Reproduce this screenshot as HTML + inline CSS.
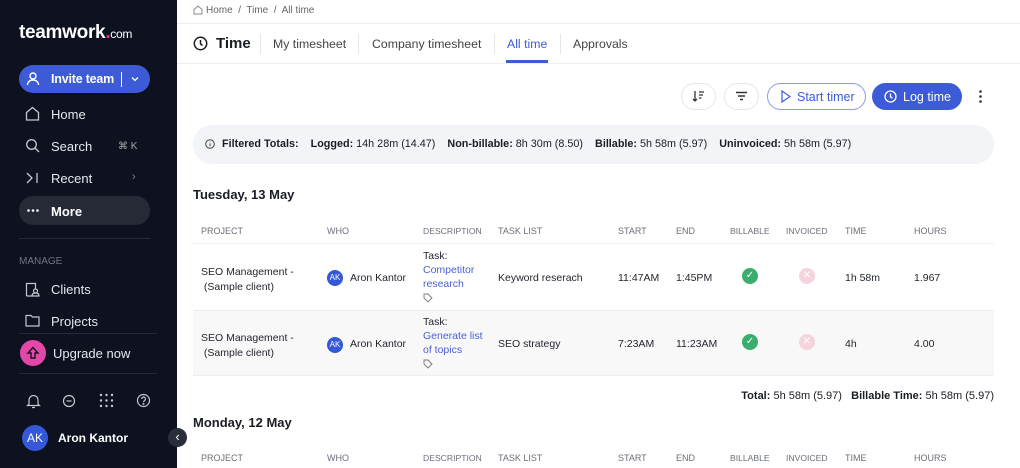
<!DOCTYPE html>
<html><head><meta charset="utf-8"><style>
*{margin:0;padding:0;box-sizing:border-box}
body{width:1020px;height:468px;overflow:hidden;font-family:"Liberation Sans",sans-serif;background:#fff;position:relative;color:#1a1d24}
.a{position:absolute;white-space:nowrap}
#sb{position:absolute;left:0;top:0;width:177px;height:468px;background:#0d1120;color:#e6e8ee}
.nav{position:absolute;left:51px;font-size:13px;color:#e6e8ee}
.ic{position:absolute;left:25px}
.th{font-size:9px;color:#6b6f7a;top:226px}
.td{font-size:10.5px;color:#1f232b}
.lnk{color:#4a5fd6}
</style></head><body>
<div id="sb">
 <div class="a" style="left:19px;top:22px;font-size:19px;font-weight:bold;color:#fff;letter-spacing:-.3px">teamwork<span style="color:#e1368e">.</span><span style="font-size:12px;font-weight:normal">com</span></div>
 <div class="a" style="left:19px;top:65px;width:131px;height:28px;border-radius:14px;background:#3d5bd6"></div>
 <svg class="a" style="left:26px;top:71px" width="14" height="15" viewBox="0 0 14 15" fill="none" stroke="#fff" stroke-width="1.4"><circle cx="7" cy="5" r="3"/><path d="M1.5 14c0-3 2.5-5 5.5-5s5.5 2 5.5 5"/></svg>
 <div class="a" style="left:51px;top:72px;font-size:12.5px;color:#fff;font-weight:bold;letter-spacing:-.2px">Invite team</div>
 <div class="a" style="left:121px;top:71px;width:1px;height:15px;background:#fff;top:72px"></div>
 <svg class="a" style="left:131px;top:76px" width="8" height="6" viewBox="0 0 8 6" fill="none" stroke="#fff" stroke-width="1.3"><path d="M1 1.5l3 3 3-3"/></svg>
 <svg class="ic" style="top:106px" width="15" height="15" viewBox="0 0 15 15" fill="none" stroke="#c5c8d0" stroke-width="1.3"><path d="M1.5 6.5L7.5 1.5l6 5V14h-12z"/></svg>
 <div class="nav" style="top:107px">Home</div>
 <svg class="ic" style="top:138px" width="15" height="15" viewBox="0 0 15 15" fill="none" stroke="#c5c8d0" stroke-width="1.3"><circle cx="6.5" cy="6.5" r="4.8"/><path d="M10 10l4 4"/></svg>
 <div class="nav" style="top:139px">Search</div>
 <div class="a" style="left:118px;top:141px;font-size:10px;color:#aaa">⌘ K</div>
 <svg class="ic" style="top:172px" width="15" height="12" viewBox="0 0 15 12" fill="none" stroke="#c5c8d0" stroke-width="1.3"><path d="M2 1l5 5-5 5M12 1v10"/></svg>
 <div class="nav" style="top:171px">Recent</div>
 <div class="a" style="left:132px;top:171px;font-size:11px;color:#888">›</div>
 <div class="a" style="left:19px;top:196px;width:131px;height:29px;border-radius:14px;background:#262a37"></div>
 <svg class="a" style="left:27px;top:209px" width="12" height="3" viewBox="0 0 12 3" fill="#fff"><circle cx="1.5" cy="1.5" r="1.3"/><circle cx="6" cy="1.5" r="1.3"/><circle cx="10.5" cy="1.5" r="1.3"/></svg>
 <div class="nav" style="top:204px;font-weight:bold;color:#fff">More</div>
 <div class="a" style="left:19px;top:238px;width:131px;height:1px;background:#262a37"></div>
 <div class="a" style="left:19px;top:256px;font-size:10px;color:#6f7482">MANAGE</div>
 <svg class="ic" style="top:282px" width="15" height="15" viewBox="0 0 15 15" fill="none" stroke="#c5c8d0" stroke-width="1.2"><path d="M1.5 14V1.5h9v5M1.5 14h5"/><circle cx="10.5" cy="9" r="2"/><path d="M7 14c0-2 1.5-3 3.5-3s3.5 1 3.5 3z"/></svg>
 <div class="nav" style="top:282px">Clients</div>
 <svg class="ic" style="top:314px" width="15" height="13" viewBox="0 0 15 13" fill="none" stroke="#c5c8d0" stroke-width="1.2"><path d="M1 1.5h5l1.5 1.5H14v9H1z"/></svg>
 <div class="nav" style="top:314px">Projects</div>
 <div class="a" style="left:19px;top:333px;width:138px;height:1px;background:#262a37"></div>
 <div class="a" style="left:20px;top:340px;width:26px;height:26px;border-radius:50%;background:#e347a7"></div>
 <svg class="a" style="left:26px;top:346px" width="14" height="14" viewBox="0 0 14 14" fill="none" stroke="#1a1020" stroke-width="1.4"><path d="M7 1.5L2 7h3v5h4V7h3z"/></svg>
 <div class="nav" style="left:53px;top:346px">Upgrade now</div>
 <div class="a" style="left:19px;top:373px;width:138px;height:1px;background:#262a37"></div>
 <svg class="a" style="left:26px;top:393px" width="15" height="16" viewBox="0 0 15 16" fill="none" stroke="#c5c8d0" stroke-width="1.2"><path d="M3 11V7a4.5 4.5 0 019 0v4l1.5 1.5h-12zM6 14.5h3"/></svg>
 <svg class="a" style="left:62px;top:394px" width="14" height="14" viewBox="0 0 14 14" fill="none" stroke="#c5c8d0" stroke-width="1.2"><circle cx="7" cy="7" r="5.5"/><path d="M4.5 7h5"/></svg>
 <svg class="a" style="left:99px;top:393px" width="15" height="15" viewBox="0 0 15 15" fill="#c5c8d0"><circle cx="2" cy="2" r="1.2"/><circle cx="7.5" cy="2" r="1.2"/><circle cx="13" cy="2" r="1.2"/><circle cx="2" cy="7.5" r="1.2"/><circle cx="7.5" cy="7.5" r="1.2"/><circle cx="13" cy="7.5" r="1.2"/><circle cx="2" cy="13" r="1.2"/><circle cx="7.5" cy="13" r="1.2"/><circle cx="13" cy="13" r="1.2"/></svg>
 <svg class="a" style="left:136px;top:393px" width="15" height="15" viewBox="0 0 15 15" fill="none" stroke="#c5c8d0" stroke-width="1.2"><circle cx="7.5" cy="7.5" r="6"/><path d="M5.7 6a1.9 1.9 0 113 1.5c-.8.5-1.2.9-1.2 1.7"/><circle cx="7.5" cy="11" r=".4"/></svg>
 <div class="a" style="left:22px;top:425px;width:26px;height:26px;border-radius:50%;background:#3558d8;color:#fff;font-size:12px;text-align:center;line-height:26px">AK</div>
 <div class="a" style="left:58px;top:431px;font-size:12px;font-weight:bold;color:#fff">Aron Kantor</div>
</div>
<div class="a" style="left:168px;top:428px;width:19px;height:19px;border-radius:50%;background:#2a2e3a;color:#fff;font-size:13px;text-align:center;line-height:18px">‹</div>

<svg class="a" style="left:193px;top:5px" width="10" height="10" viewBox="0 0 10 10" fill="none" stroke="#888" stroke-width="1"><path d="M1 4.5L5 1l4 3.5V9H1z"/></svg>
<div class="a" style="left:206px;top:5px;font-size:10px;color:#666">Home &nbsp;/&nbsp; Time &nbsp;/&nbsp; All time</div>
<div class="a" style="left:177px;top:23px;width:843px;height:1px;background:#eee"></div>
<svg class="a" style="left:193px;top:36px" width="15" height="15" viewBox="0 0 15 15" fill="none" stroke="#1a1d24" stroke-width="1.5"><circle cx="7.5" cy="7.5" r="6.2"/><path d="M7.5 4v4l2 1.5"/></svg>
<div class="a" style="left:216px;top:35px;font-size:15px;font-weight:bold">Time</div>
<div class="a" style="left:260px;top:34px;width:1px;height:20px;background:#e5e5e5"></div>
<div class="a" style="left:273px;top:37px;font-size:12.3px;color:#444">My timesheet</div>
<div class="a" style="left:358px;top:34px;width:1px;height:20px;background:#e5e5e5"></div>
<div class="a" style="left:372px;top:37px;font-size:12.3px;color:#444">Company timesheet</div>
<div class="a" style="left:494px;top:34px;width:1px;height:20px;background:#e5e5e5"></div>
<div class="a" style="left:507px;top:37px;font-size:12.3px;color:#3d5bd6">All time</div>
<div class="a" style="left:506px;top:60px;width:42px;height:3px;background:#3d5bd6"></div>
<div class="a" style="left:560px;top:34px;width:1px;height:20px;background:#e5e5e5"></div>
<div class="a" style="left:573px;top:37px;font-size:12.3px;color:#444">Approvals</div>
<div class="a" style="left:177px;top:63px;width:843px;height:1px;background:#eee"></div>

<div class="a" style="left:681px;top:83px;width:35px;height:27px;border:1px solid #e6e6e6;border-radius:14px"></div>
<svg class="a" style="left:692px;top:90px" width="13" height="12" viewBox="0 0 13 12" fill="none" stroke="#333" stroke-width="1.3"><path d="M3 1v10M1 9l2 2 2-2M7 2h5M7 5h4M7 8h2.5"/></svg>
<div class="a" style="left:724px;top:83px;width:35px;height:27px;border:1px solid #e6e6e6;border-radius:14px"></div>
<svg class="a" style="left:735px;top:91px" width="13" height="10" viewBox="0 0 13 10" stroke="#333" stroke-width="1.4"><path d="M1 1.5h11M3 5h7M5 8.5h3"/></svg>
<div class="a" style="left:767px;top:83px;width:99px;height:27px;border:1px solid #8b9be6;border-radius:14px"></div>
<svg class="a" style="left:781px;top:90px" width="10" height="13" viewBox="0 0 10 13" fill="none" stroke="#3d5bd6" stroke-width="1.2"><path d="M1 1l8 5.5L1 12z"/></svg>
<div class="a" style="left:797px;top:90px;font-size:12.5px;color:#3d5bd6">Start timer</div>
<div class="a" style="left:872px;top:83px;width:90px;height:27px;background:#3d5bd6;border-radius:14px"></div>
<svg class="a" style="left:884px;top:90px" width="13" height="13" viewBox="0 0 13 13" fill="none" stroke="#fff" stroke-width="1.3"><circle cx="6.5" cy="6.5" r="5.5"/><path d="M6.5 3.5v3.5l2 1"/></svg>
<div class="a" style="left:903px;top:90px;font-size:12.5px;color:#fff">Log time</div>
<svg class="a" style="left:979px;top:90px" width="3" height="13" viewBox="0 0 3 13" fill="#333"><circle cx="1.5" cy="1.5" r="1.3"/><circle cx="1.5" cy="6.5" r="1.3"/><circle cx="1.5" cy="11.5" r="1.3"/></svg>

<div class="a" style="left:193px;top:125px;width:801px;height:39px;border-radius:19px;background:#f3f4f7"></div>
<svg class="a" style="left:205px;top:139px" width="10" height="10" viewBox="0 0 10 10" fill="none" stroke="#444" stroke-width="1"><circle cx="5" cy="5" r="4.3"/><path d="M5 4.3v3M5 2.6v.4"/></svg>
<div class="a" style="left:222px;top:138px;font-size:10.8px"><b>Filtered Totals:</b>&nbsp;&nbsp;&nbsp;&nbsp;<b>Logged:</b> 14h 28m (14.47)&nbsp;&nbsp;&nbsp;&nbsp;<b>Non-billable:</b> 8h 30m (8.50)&nbsp;&nbsp;&nbsp;&nbsp;<b>Billable:</b> 5h 58m (5.97)&nbsp;&nbsp;&nbsp;&nbsp;<b>Uninvoiced:</b> 5h 58m (5.97)</div>

<div class="a" style="left:193px;top:187px;font-size:13px;font-weight:bold">Tuesday, 13 May</div>
<div class="a th" style="left:201px">PROJECT</div><div class="a th" style="left:327px">WHO</div><div class="a th" style="left:423px;font-size:8.6px">DESCRIPTION</div><div class="a th" style="left:498px">TASK LIST</div><div class="a th" style="left:618px">START</div><div class="a th" style="left:676px">END</div><div class="a th" style="left:730px;font-size:8.6px">BILLABLE</div><div class="a th" style="left:786px;font-size:8.6px">INVOICED</div><div class="a th" style="left:845px">TIME</div><div class="a th" style="left:914px">HOURS</div>
<div class="a" style="left:193px;top:243px;width:801px;height:1px;background:#eee"></div>
<div class="a" style="left:193px;top:310px;width:801px;height:66px;background:#f8f8f9;border-top:1px solid #eee;border-bottom:1px solid #eee"></div>

<div class="a td" style="left:201px;top:265px;line-height:15px">SEO Management -<br>&nbsp;(Sample client)</div>
<div class="a" style="left:327px;top:270px;width:16px;height:16px;border-radius:50%;background:#3558d8;color:#fff;font-size:8px;text-align:center;line-height:16px">AK</div>
<div class="a td" style="left:350px;top:272px">Aron Kantor</div>
<div class="a td" style="left:423px;top:249px;line-height:14px">Task:<br><span class="lnk">Competitor<br>research</span></div>
<svg class="a" style="left:423px;top:293px" width="10" height="10" viewBox="0 0 10 10" fill="none" stroke="#777" stroke-width=".9"><path d="M1 1h4l4 4-4 4-4-4z"/></svg>
<div class="a td" style="left:498px;top:272px">Keyword reserach</div>
<div class="a td" style="left:618px;top:272px">11:47AM</div>
<div class="a td" style="left:676px;top:272px">1:45PM</div>
<div class="a" style="left:742px;top:268px;width:16px;height:16px;border-radius:50%;background:#3aae6e;color:#fff;font-size:10px;text-align:center;line-height:16px">✓</div>
<div class="a" style="left:799px;top:268px;width:16px;height:16px;border-radius:50%;background:#f6d4dc;color:#fff;font-size:10px;text-align:center;line-height:16px">✕</div>
<div class="a td" style="left:845px;top:272px">1h 58m</div>
<div class="a td" style="left:914px;top:272px">1.967</div>

<div class="a td" style="left:201px;top:331px;line-height:15px">SEO Management -<br>&nbsp;(Sample client)</div>
<div class="a" style="left:327px;top:337px;width:16px;height:16px;border-radius:50%;background:#3558d8;color:#fff;font-size:8px;text-align:center;line-height:16px">AK</div>
<div class="a td" style="left:350px;top:338px">Aron Kantor</div>
<div class="a td" style="left:423px;top:315px;line-height:14px">Task:<br><span class="lnk">Generate list<br>of topics</span></div>
<svg class="a" style="left:423px;top:359px" width="10" height="10" viewBox="0 0 10 10" fill="none" stroke="#777" stroke-width=".9"><path d="M1 1h4l4 4-4 4-4-4z"/></svg>
<div class="a td" style="left:498px;top:338px">SEO strategy</div>
<div class="a td" style="left:618px;top:338px">7:23AM</div>
<div class="a td" style="left:676px;top:338px">11:23AM</div>
<div class="a" style="left:742px;top:334px;width:16px;height:16px;border-radius:50%;background:#3aae6e;color:#fff;font-size:10px;text-align:center;line-height:16px">✓</div>
<div class="a" style="left:799px;top:334px;width:16px;height:16px;border-radius:50%;background:#f6d4dc;color:#fff;font-size:10px;text-align:center;line-height:16px">✕</div>
<div class="a td" style="left:845px;top:338px">4h</div>
<div class="a td" style="left:914px;top:338px">4.00</div>

<div class="a" style="right:26px;top:390px;font-size:11px"><b>Total:</b> 5h 58m (5.97)&nbsp;&nbsp;&nbsp;<b>Billable Time:</b> 5h 58m (5.97)</div>
<div class="a" style="left:193px;top:415px;font-size:13px;font-weight:bold">Monday, 12 May</div>
<div class="a th" style="left:201px;top:453px">PROJECT</div><div class="a th" style="left:327px;top:453px">WHO</div><div class="a th" style="left:423px;top:453px;font-size:8.6px">DESCRIPTION</div><div class="a th" style="left:498px;top:453px">TASK LIST</div><div class="a th" style="left:618px;top:453px">START</div><div class="a th" style="left:676px;top:453px">END</div><div class="a th" style="left:730px;top:453px;font-size:8.6px">BILLABLE</div><div class="a th" style="left:786px;top:453px;font-size:8.6px">INVOICED</div><div class="a th" style="left:845px;top:453px">TIME</div><div class="a th" style="left:914px;top:453px">HOURS</div>
</body></html>
